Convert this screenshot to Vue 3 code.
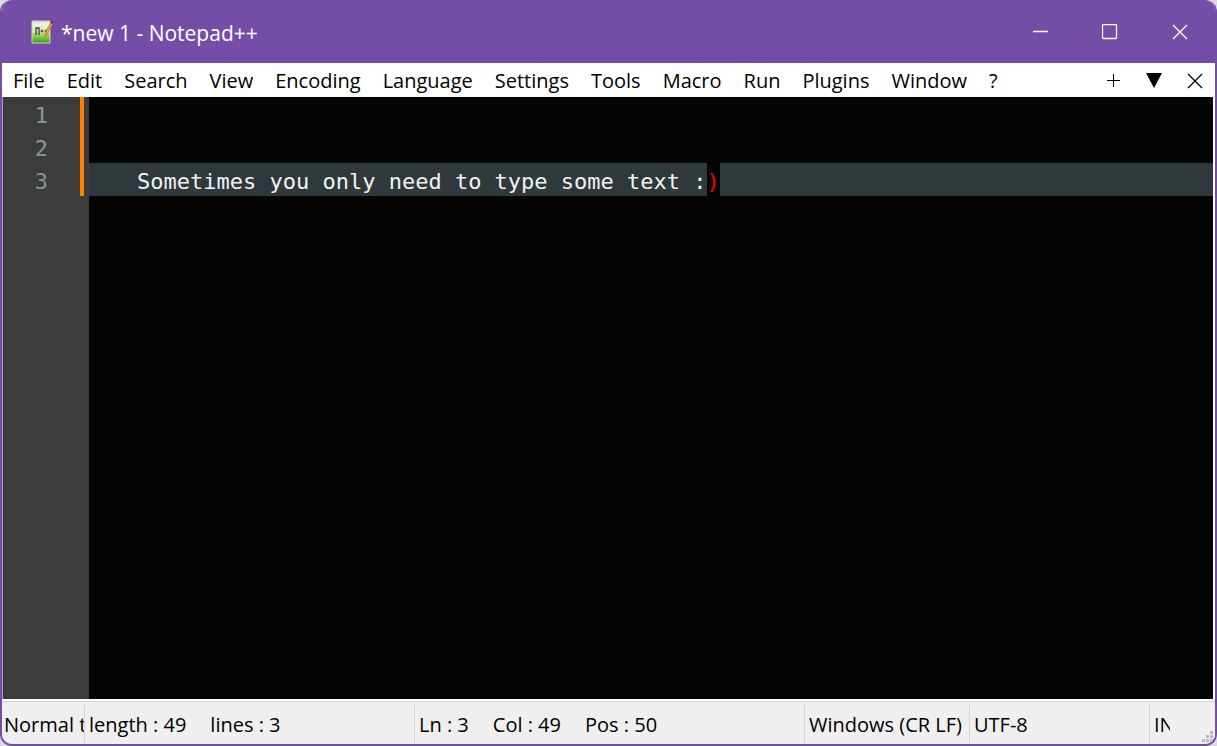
<script setup>
const menus = ['File', 'Edit', 'Search', 'View', 'Encoding', 'Language', 'Settings', 'Tools', 'Macro', 'Run', 'Plugins', 'Window', '?']
const lines = [1, 2, 3]
</script>

<template>
  <div class="window">
    <header class="titlebar">
      <svg class="logo" viewBox="0 0 22 24" aria-hidden="true">
        <defs>
          <linearGradient id="page" x1="0" y1="0" x2="0" y2="1">
            <stop offset="0" stop-color="#f4f6f0" />
            <stop offset="0.45" stop-color="#dcebbf" />
            <stop offset="0.75" stop-color="#7cc63a" />
            <stop offset="1" stop-color="#3f9a1c" />
          </linearGradient>
        </defs>
        <path d="M1 1h18v22H1z" fill="url(#page)" stroke="#c9d8c4" />
        <path d="M2 2h16" stroke="#a9b3ac" stroke-dasharray="1 1" />
        <path d="M5 15V8h3v7" fill="none" stroke="#3c3f3a" stroke-width="1.3" />
        <path d="M9.500 11h3M11 9.500v3M13.500 11h3M15 9.500v3" stroke="#3c3f3a" />
        <path d="M19.500 2.500l2 1.500-5.500 11-2.500 2 .5-3.500z" fill="#e3a53a" stroke="#a5731f" stroke-width="0.6" />
        <path d="M19.500 2.500l1-1.500 1.500 1-.5 2z" fill="#3f3a4a" />
      </svg>
      <h1 class="title">*new 1 - Notepad++</h1>
      <div class="controls">
        <button type="button" aria-label="Minimize">
          <svg viewBox="0 0 16 16"><path d="M1 7.500h15" /></svg>
        </button>
        <button type="button" aria-label="Maximize">
          <svg viewBox="0 0 16 16"><rect x="0.5" y="0.5" width="14" height="14" rx="1" /></svg>
        </button>
        <button type="button" aria-label="Close">
          <svg viewBox="0 0 16 16"><path d="M1 1l14 14M15 1L1 15" /></svg>
        </button>
      </div>
    </header>

    <nav class="menubar">
      <button v-for="m in menus" :key="m" type="button">{{ m }}</button>
      <div class="tabtools">
        <button type="button" aria-label="New document">
          <svg viewBox="0 0 16 16"><path class="thin" d="M2 7.500h13M8.500 1v13" /></svg>
        </button>
        <button type="button" aria-label="Document list">
          <svg viewBox="0 0 16 16"><path class="solid" d="M0 0h16L8 15z" /></svg>
        </button>
        <button type="button" aria-label="Close document">
          <svg viewBox="0 0 16 16"><path d="M1 1l14 14M15 1L1 15" /></svg>
        </button>
      </div>
    </nav>

    <main class="editor">
      <div class="gutter">
        <ol class="numbers">
          <li v-for="n in lines" :key="n">{{ n }}</li>
        </ol>
      </div>
      <div class="code" role="textbox" aria-multiline="true" aria-label="Document text" contenteditable="true" spellcheck="false">
        <div class="line"></div>
        <div class="line"></div>
        <div class="line current">Sometimes you only need to type some text :<span class="brace">)</span></div>
      </div>
    </main>

    <footer class="status">
      <div class="cell type">Normal t</div>
      <div class="cell doc"><span>length : 49</span><span>lines : 3</span></div>
      <div class="cell pos"><span>Ln : 3</span><span>Col : 49</span><span>Pos : 50</span></div>
      <div class="cell eol">Windows (CR LF)</div>
      <div class="cell enc">UTF-8</div>
      <div class="cell mode"><span class="clip">IN</span></div>
      <svg class="grip" viewBox="0 0 12 12" aria-hidden="true">
        <path d="M8 0h3v3H8zM4 4h3v3H4zM8 4h3v3H8zM0 8h3v3H0zM4 8h3v3H4zM8 8h3v3H8z" />
      </svg>
    </footer>
  </div>
</template>

<style>
body {
  background: #dcd8e2;
}
</style>

<style scoped>
.window {
  box-sizing: border-box;
  height: 100vh;
  display: flex;
  flex-direction: column;
  overflow: hidden;
  border: 2px solid #754da7;
  border-top: 0;
  border-radius: 12px;
  background: #fff;
  color: #000;
  font-family: "Open Sans", "Noto Sans", sans-serif;
  font-size: 20px;
  line-height: 26px;
}

button {
  border: 0;
  padding: 0;
  background: none;
  color: inherit;
  font: inherit;
}

svg {
  display: block;
}

.titlebar {
  flex: none;
  height: 63px;
  display: flex;
  align-items: center;
  padding-left: 29px;
  background: #754da7;
  color: #fff;
}

.logo {
  width: 22px;
  height: 24px;
}

.title {
  margin: 2px 0 0 8px;
  font-size: 21px;
  font-weight: 400;
}

.controls {
  margin-left: auto;
  display: flex;
  align-self: stretch;
}

.controls button {
  width: 70px;
  display: flex;
  align-items: center;
  justify-content: center;
}

.controls svg,
.tabtools svg {
  width: 16px;
  height: 16px;
  fill: none;
  stroke: #fff;
  stroke-width: 1.3;
}

.menubar {
  flex: none;
  box-sizing: border-box;
  height: 34px;
  display: flex;
  align-items: center;
  gap: 22px;
  padding: 2px 12px 0 11px;
}

.tabtools {
  margin-left: auto;
  display: flex;
  gap: 25px;
}

.tabtools svg {
  stroke: #000;
}

.tabtools .thin {
  stroke-width: 1;
}

.tabtools .solid {
  fill: #000;
  stroke: none;
}

.editor {
  flex: 1;
  display: flex;
  min-height: 0;
  margin-right: 2px;
  border-left: 1px solid #a0a0a0;
  background: #050505;
  font-family: "DejaVu Sans Mono", "Liberation Mono", monospace;
  font-size: 22px;
  line-height: 37px;
}

.gutter {
  flex: none;
  width: 86px;
  background: #3c3c3c;
  color: #84979c;
}

.numbers {
  margin: 0 5px 0 0;
  padding: 0 32px 0 0;
  border-right: 4px solid #ff8000;
  list-style: none;
  text-align: right;
}

.numbers li {
  height: 33px;
}

.code {
  flex: 1;
  outline: 0;
  color: #f1f2f3;
  white-space: pre;
  overflow: hidden;
}

.line {
  height: 33px;
  padding-left: 48px;
  overflow: hidden;
}

.current {
  background: #2f393c;
}

.brace {
  display: inline-block;
  background: #050505;
  color: #ff0000;
}

.status {
  flex: none;
  position: relative;
  display: flex;
  height: 42px;
  border-top: 1px solid #d4d4d4;
  margin-top: 2px;
  background: #efefef;
}

.cell {
  box-sizing: border-box;
  display: flex;
  gap: 24px;
  margin-top: 2px;
  padding: 8px 0 0 4px;
  border-left: 1px solid #d4d4d4;
  white-space: nowrap;
  overflow: hidden;
}

.type {
  flex: 0 0 82px;
  border-left: 0;
  padding-left: 2px;
}

.doc {
  flex: 0 0 330px;
}

.pos {
  flex: 1;
}

.eol {
  flex: 0 0 165px;
}

.enc {
  flex: 0 0 180px;
}

.mode {
  flex: 0 0 66px;
}

.clip {
  width: 16px;
  overflow: hidden;
}

.grip {
  position: absolute;
  right: 1px;
  bottom: 1px;
  width: 12px;
  height: 12px;
  fill: #b8b8b8;
}
</style>
